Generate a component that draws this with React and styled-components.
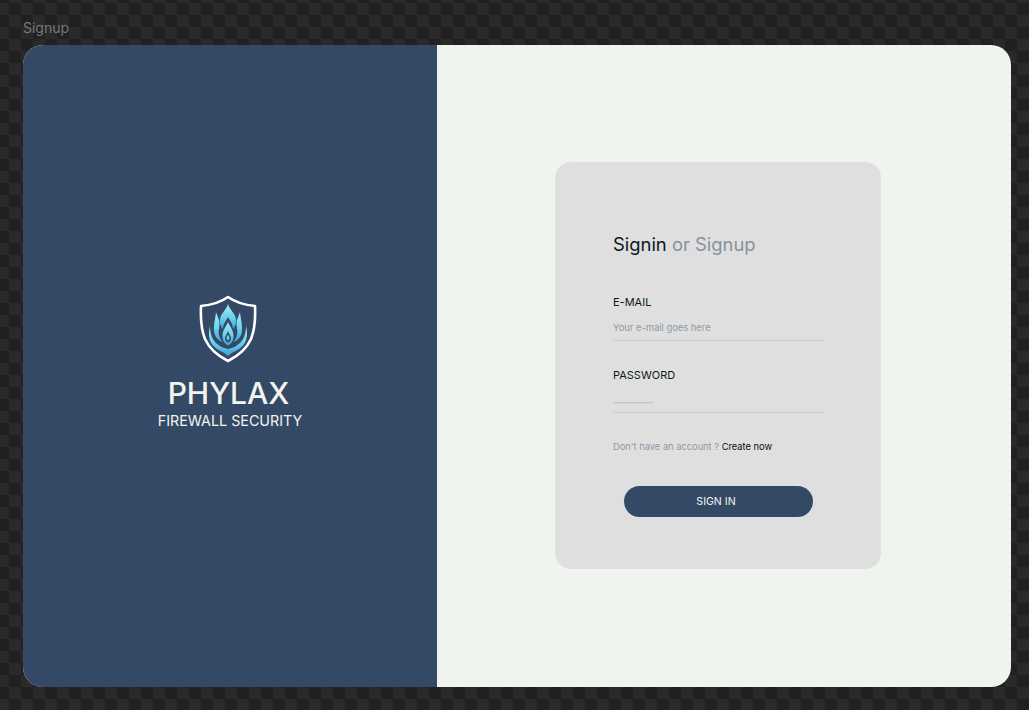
import React from 'react';
import styled, { createGlobalStyle } from 'styled-components';

const GlobalStyle = createGlobalStyle`
  html, body {
    margin: 0;
    padding: 0;
    height: 100%;
    overflow: hidden;
  }
  body {
    font-family: Inter, "Liberation Sans", sans-serif;
  }
`;

const ShieldLogo = () => (
  <LogoSvg width="58" height="68" viewBox="0 0 58 68" fill="none">
    <defs>
      <linearGradient id="flame" x1="0" y1="0" x2="0" y2="1">
        <stop offset="0" stopColor="#a4eef5" />
        <stop offset="0.55" stopColor="#68d2ec" />
        <stop offset="1" stopColor="#3f9fd8" />
      </linearGradient>
    </defs>
    <path
      d="M29 2 C36 7 45 10 56 11 C56.5 22 56 34 52 44 C47.5 54 39 61 29 66 C19 61 10.5 54 6 44 C2 34 1.5 22 2 11 C13 10 22 7 29 2 Z"
      stroke="#ffffff"
      strokeWidth="2.6"
      strokeLinejoin="round"
    />
    <g fill="url(#flame)" fillRule="evenodd">
      <path d="M29 9 C30 14 36 18 37 24 C37.8 28 36 32 34 34 C34 29 31 26 29 22 C27 26 24 29 24 34 C22 32 20.2 28 21 24 C22 18 28 14 29 9 Z" />
      <path d="M17 17 C18 21 20.5 24 20.5 29 C20.5 33 19 36 20 40 C20.8 43 22 45 24 47 C19.5 46 15.5 42 15 36 C14.6 28 16.5 23 17 17 Z" />
      <path d="M41 17 C40 21 37.5 24 37.5 29 C37.5 33 39 36 38 40 C37.2 43 36 45 34 47 C38.5 46 42.5 42 43 36 C43.4 28 41.5 23 41 17 Z" />
      <path d="M29 27 C30.5 31 34.5 35 34.5 41 C34.5 46 32 49 29 50.5 C26 49 23.5 46 23.5 41 C23.5 35 27.5 31 29 27 Z M29 36 C28 39 26 41 26 43.5 C26 45.5 27.5 47 29 47.5 C30.5 47 32 45.5 32 43.5 C32 41 30 39 29 36 Z" />
      <path d="M29 39.5 C29.5 41 30.5 42 30.5 43.5 C30.5 44.5 29.8 45.3 29 45.6 C28.2 45.3 27.5 44.5 27.5 43.5 C27.5 42 28.5 41 29 39.5 Z" />
      <path d="M11 31 C11 40 14 47 21 51 C24 53 27 53.5 29 54 C31 53.5 34 53 37 51 C44 47 47 40 47 31 C49.5 41 47.5 49 40 54 C36 56.5 32 58 29 61 C26 58 22 56.5 18 54 C10.5 49 8.5 41 11 31 Z" />
    </g>
  </LogoSvg>
);

const App = () => (
  <>
    <GlobalStyle />
    <Page>
      <PageTitle>Signup</PageTitle>
      <Frame>
        <BrandPane>
          <ShieldLogo />
          <BrandName>PHYLAX</BrandName>
          <BrandTag>FIREWALL SECURITY</BrandTag>
        </BrandPane>
        <FormPane>
          <Card>
            <Heading>
              Signin <Muted>or Signup</Muted>
            </Heading>
            <Field>
              <Label>E-MAIL</Label>
              <Value>Your e-mail goes here</Value>
            </Field>
            <Field>
              <Label>PASSWORD</Label>
              <Value $dots>···············</Value>
            </Field>
            <Prompt>
              Don't have an account ? <CreateLink>Create now</CreateLink>
            </Prompt>
            <SignInButton>SIGN IN</SignInButton>
          </Card>
        </FormPane>
      </Frame>
    </Page>
  </>
);

const Page = styled.div`
  box-sizing: border-box;
  width: 1029px;
  height: 710px;
  padding: 19px 18px 23px 23px;
  background-color: #212121;
  background-image: conic-gradient(
    #2a2a2a 25%,
    transparent 25% 50%,
    #2a2a2a 50% 75%,
    transparent 75%
  );
  background-size: 24px 24px;
  background-position: 9px 3px;
  overflow: hidden;
`;

const PageTitle = styled.div`
  height: 26px;
  font-size: 14px;
  line-height: 17px;
  color: #777777;
`;

const Frame = styled.div`
  display: flex;
  height: 642px;
  border-radius: 20px;
  overflow: hidden;
  background: #eff4ee;
`;

const BrandPane = styled.div`
  width: 414px;
  flex: none;
  display: flex;
  flex-direction: column;
  align-items: center;
  justify-content: center;
  padding-bottom: 7px;
  background: #344966;
  color: #f2f5ef;
`;

const LogoSvg = styled.svg`
  margin-right: 4px;
`;

const BrandName = styled.div`
  margin: 12px 3px 0 0;
  font-size: 30px;
  font-weight: 500;
  line-height: 36px;
`;

const BrandTag = styled.div`
  font-size: 14.3px;
  line-height: 19px;
`;

const FormPane = styled.div`
  flex: 1;
  display: flex;
  align-items: center;
  padding: 0 0 2px 118px;
`;

const Card = styled.div`
  box-sizing: border-box;
  width: 326px;
  height: 407px;
  padding: 70px 58px 0;
  border-radius: 16px;
  background: #dfdfdf;
`;

const Heading = styled.div`
  font-size: 18.4px;
  line-height: 24px;
  color: #0d1821;
  margin-bottom: 40px;
`;

const Muted = styled.span`
  color: #8392a1;
`;

const Field = styled.div`
  width: 211px;
  margin-bottom: 28px;
  border-bottom: 1px solid #c3cdcb;
`;

const Label = styled.div`
  font-size: 11px;
  line-height: 13px;
  color: #0d1821;
  margin-bottom: 13px;
`;

const Value = styled.div`
  font-size: 9.4px;
  line-height: 12px;
  padding: ${(p) => (p.$dots ? '2px 0 3px' : '0 0 6px')};
  color: #8c99a6;
`;

const Prompt = styled.div`
  font-size: 9.3px;
  line-height: 11px;
  margin-top: 27px;
  color: #8c99a6;
`;

const CreateLink = styled.span`
  color: #0d0d0d;
`;

const SignInButton = styled.button`
  display: block;
  width: 189px;
  height: 31px;
  margin: 34px 0 0 11px;
  padding: 0 5px 0 0;
  border: none;
  border-radius: 16px;
  background: #344966;
  color: #f2f5ef;
  font-family: inherit;
  font-size: 10.6px;
`;

export default App;
